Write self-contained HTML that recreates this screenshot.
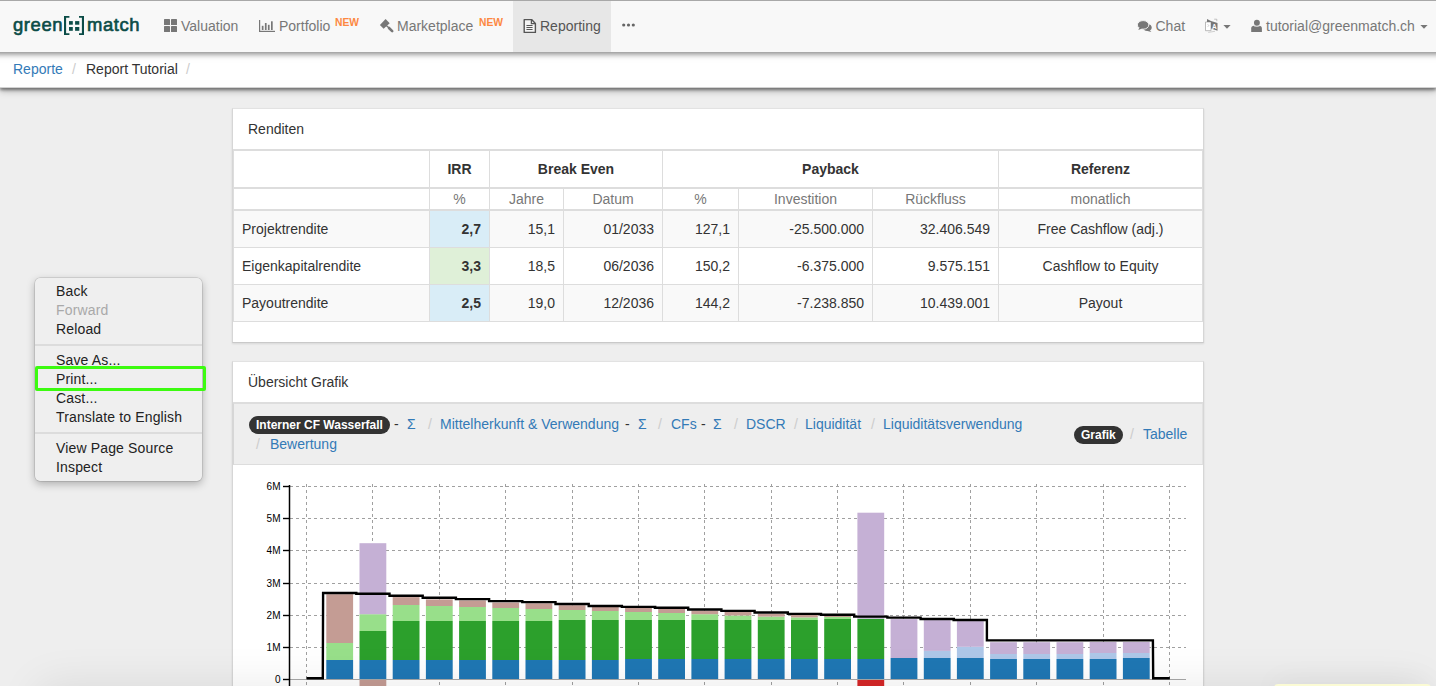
<!DOCTYPE html>
<html><head><meta charset="utf-8">
<style>
*{box-sizing:border-box;margin:0;padding:0}
html,body{width:1436px;height:686px;overflow:hidden}
body{background:#eeeeee;font-family:"Liberation Sans",sans-serif;font-size:14px;line-height:20px;color:#333;position:relative}
.abs{position:absolute;white-space:nowrap}
#nav{position:absolute;left:0;top:0;width:1436px;height:52px;background:#f8f8f8;border-top:1px solid #a8a8a8;z-index:3}
#nav::after{content:"";position:absolute;left:-30px;right:-30px;top:0;bottom:0;box-shadow:0 2px 6px rgba(0,0,0,0.5);z-index:-1;clip-path:inset(0 -10px -20px -10px)}
#crumb{position:absolute;left:0;top:52px;width:1436px;height:36px;background:#fff;border-bottom:1px solid #d2d2d2;box-shadow:0 2px 3px rgba(0,0,0,0.42), 0 3px 7px rgba(0,0,0,0.25);z-index:2}
.nt{color:#777;font-size:14px;line-height:20px}
.new{color:#fd8842;font-size:10.3px;font-weight:bold;line-height:10px}
.panel{position:absolute;background:#fff;border:1px solid #d6d6d6;border-top-color:#e2e2e2;border-bottom-color:#c9c9c9;box-shadow:0 1px 2px rgba(0,0,0,0.10)}
.ph{position:absolute;left:0;top:0;right:0;height:41px;border-bottom:1px solid #ddd;padding:10px 15px 0 15px;color:#333}
table.t{position:absolute;left:0;top:41px;border-collapse:collapse;table-layout:fixed;width:968px}
table.t td,table.t th{border:1px solid #ddd;padding:8px;line-height:20px;font-size:14px;white-space:nowrap}
table.t thead tr:first-child th{border-bottom-width:2px;text-align:center}
table.t thead tr.r2 th{padding:0 8px;font-weight:normal;color:#777;border-bottom-width:2px;text-align:center}
table.t tbody td{text-align:right}
table.t tbody td:first-child{text-align:left}
table.t tbody td:last-child{text-align:center}
table.t tbody tr.s td{background:#f9f9f9}
table.t td.info{background:#d9edf7 !important;font-weight:bold}
table.t td.succ{background:#dff0d8 !important;font-weight:bold}
.lnk{color:#337ab7}
.sep{color:#ccc}
.pill{background:#333;color:#fff;font-weight:bold;font-size:12px;border-radius:9px;line-height:17px;padding:0 7px}
#menu{position:absolute;left:35px;top:278px;width:167px;height:203px;background:#efefef;border-radius:5px;box-shadow:0 0 0 0.5px rgba(0,0,0,0.18),0 3px 8px rgba(0,0,0,0.28);z-index:10}
#menu .mi{position:absolute;left:21px;font-size:14px;line-height:16px;color:#222;white-space:nowrap;letter-spacing:0.15px}
#menu .hr{position:absolute;left:0;width:167px;height:2px;background:#dcdcdc}
#green{position:absolute;left:35px;top:366px;width:171px;height:25px;border:3px solid #3cfb10;border-radius:2px;z-index:11}
</style></head><body>

<div id="nav">
  <!-- logo -->
  <div class="abs" style="left:13px;top:10.5px;color:#0b4c47;font-weight:normal;-webkit-text-stroke:0.65px #0b4c47;font-size:19px;line-height:26px;transform:scaleX(0.97);transform-origin:0 0;letter-spacing:0.6px">green</div>
  <svg class="abs" style="left:63px;top:14px" width="23" height="21" viewBox="0 0 23 21"><path d="M1 1 H6.4 V2.8 H3.1 V18.2 H6.4 V20 H1 Z" fill="#0b4c47"/><rect x="6" y="6.1" width="3.8" height="3.6" fill="#0b4c47"/><rect x="12.1" y="6.1" width="4.2" height="3.6" fill="#0b4c47"/><rect x="6" y="12" width="3.8" height="3.8" fill="#0b4c47"/><rect x="12.1" y="12" width="4.2" height="3.8" fill="#0b4c47"/><path d="M16 1 H21 V20 H16 V18.2 H18.9 V2.8 H16 Z" fill="#0b4c47"/></svg>
  <div class="abs" style="left:87px;top:10.5px;color:#0b4c47;font-weight:normal;-webkit-text-stroke:0.65px #0b4c47;font-size:19px;line-height:26px;transform:scaleX(0.97);transform-origin:0 0;letter-spacing:0.6px">match</div>
  <!-- Valuation -->
  <svg class="abs" style="left:163px;top:17px" width="15" height="15" viewBox="0 0 15 15"><rect x="1" y="1" width="6" height="6" rx="0.6" fill="#777"/><rect x="8" y="1" width="6" height="6" rx="0.6" fill="#777"/><rect x="1" y="8" width="6" height="6" rx="0.6" fill="#777"/><rect x="8" y="8" width="6" height="6" rx="0.6" fill="#777"/></svg>
  <div class="abs nt" style="left:181px;top:15px">Valuation</div>
  <!-- Portfolio -->
  <svg class="abs" style="left:258px;top:18px" width="18" height="14" viewBox="0 0 18 14"><rect x="1" y="1" width="1.2" height="12" fill="#777"/><rect x="1" y="11.8" width="16" height="1.2" fill="#777"/><rect x="3.8" y="6.8" width="1.7" height="4.2" fill="#777"/><rect x="6.9" y="4" width="1.7" height="7" fill="#777"/><rect x="9.9" y="5.8" width="1.7" height="5.2" fill="#777"/><rect x="13" y="2.3" width="1.7" height="8.7" fill="#777"/></svg>
  <div class="abs nt" style="left:279px;top:15px">Portfolio</div>
  <div class="abs new" style="left:335px;top:17px">NEW</div>
  <!-- Marketplace -->
  <svg class="abs" style="left:376px;top:15px" width="22" height="20" viewBox="0 0 22 20"><path d="M9.6 3.1 L13.7 7.3 L7.6 12.8 L3.9 9 Z" fill="#777"/><line x1="10" y1="9.2" x2="12.8" y2="11.8" stroke="#777" stroke-width="1.3"/><line x1="13" y1="12" x2="16.2" y2="15.2" stroke="#777" stroke-width="2.6" stroke-linecap="round"/></svg>
  <div class="abs nt" style="left:397px;top:15px">Marketplace</div>
  <div class="abs new" style="left:479px;top:17px">NEW</div>
  <!-- Reporting active -->
  <div class="abs" style="left:513px;top:0;width:98px;height:51px;background:#e7e7e7"></div>
  <svg class="abs" style="left:522px;top:17px" width="15" height="16" viewBox="0 0 15 16"><path d="M2.2 1.6 H9.6 L13.4 5.4 V14.4 H2.2 Z" fill="#f4f4f4" stroke="#555" stroke-width="1.4" stroke-linejoin="round"/><path d="M9.4 1.6 V5.6 H13.4" fill="none" stroke="#555" stroke-width="1.3"/><rect x="4.3" y="7" width="6.4" height="1.1" rx="0.5" fill="#555"/><rect x="4.3" y="9" width="6.4" height="1.1" rx="0.5" fill="#555"/><rect x="4.3" y="11" width="6.4" height="1.1" rx="0.5" fill="#555"/></svg>
  <div class="abs nt" style="left:540px;top:15px;color:#555">Reporting</div>
  <!-- dots -->
  <svg class="abs" style="left:621px;top:21px" width="15" height="6" viewBox="0 0 15 6"><circle cx="2.7" cy="3" r="1.6" fill="#666"/><circle cx="7.5" cy="3" r="1.6" fill="#666"/><circle cx="12.3" cy="3" r="1.6" fill="#666"/></svg>
  <!-- Chat -->
  <svg class="abs" style="left:1134px;top:15px" width="20" height="18" viewBox="0 0 20 18"><ellipse cx="13.4" cy="11.6" rx="4.3" ry="3.4" fill="#777"/><path d="M15 13.5 L17.4 15.9 L12.5 14.8 Z" fill="#777"/><ellipse cx="9.1" cy="8.9" rx="5.7" ry="4.3" fill="#777" stroke="#f8f8f8" stroke-width="0.9"/><path d="M5.5 11.5 L4.3 14 L8.2 12.6 Z" fill="#777"/></svg>
  <div class="abs nt" style="left:1155.5px;top:15px">Chat</div>
  
  <!-- translate -->
  <svg class="abs" style="left:1200px;top:13px" width="22" height="22" viewBox="0 0 22 22"><path d="M5.5 8 H11 V16.7 H5.5 Z" fill="#fff" stroke="#aaa" stroke-width="0.8"/><path d="M7 5 L11 7 L11 8 L7 8 Z" fill="#777"/><path d="M14.2 5.2 H16.8 V7.2" fill="none" stroke="#aaa" stroke-width="0.7"/><path d="M11 7 L17.5 9 V16.8 L11 14.5 Z" fill="#777"/><text x="14.4" y="14.6" font-family="Liberation Sans" font-size="6.5" font-weight="bold" fill="#fff" text-anchor="middle">A</text><path d="M7.5 10.5 L9 11.5 L7.5 13" fill="none" stroke="#bbb" stroke-width="0.6"/><path d="M8.2 18.4 L15 17.3" stroke="#bbb" stroke-width="0.7"/></svg>
  <svg class="abs" style="left:1223px;top:24px" width="8" height="5" viewBox="0 0 8 5"><path d="M0.4 0 H7.6 L4 3.8 Z" fill="#777"/></svg>
  <!-- user -->
  <svg class="abs" style="left:1246px;top:15px" width="20" height="18" viewBox="0 0 20 18"><circle cx="10.9" cy="6.8" r="2.95" fill="#777"/><path d="M5.2 15.9 V12.6 Q5.2 9.8 8.2 9.8 H13 Q15.9 9.8 15.9 12.6 V15.9 Z" fill="#777" stroke="#f8f8f8" stroke-width="0"/><path d="M8 9.9 Q10.9 11 13.5 9.9" fill="none" stroke="#f8f8f8" stroke-width="0.8"/></svg>
  <div class="abs nt" style="left:1266px;top:15px">tutorial@greenmatch.ch</div>
  <svg class="abs" style="left:1420px;top:24px" width="8" height="5" viewBox="0 0 8 5"><path d="M0.4 0 H7.6 L4 3.8 Z" fill="#777"/></svg>
</div>

<div id="crumb">
  <div class="abs lnk" style="left:13px;top:7px">Reporte</div>
  <div class="abs sep" style="left:72px;top:7px">/</div>
  <div class="abs" style="left:86px;top:7px;color:#333">Report Tutorial</div>
  <div class="abs sep" style="left:186px;top:7px">/</div>
</div>

<!-- Panel 1 -->
<div class="panel" style="left:232px;top:108px;width:972px;height:235px">
  <div class="ph">Renditen</div>
  <table class="t">
    <colgroup><col style="width:196px"><col style="width:60px"><col style="width:74px"><col style="width:99px"><col style="width:76px"><col style="width:134px"><col style="width:126px"><col style="width:204px"></colgroup>
    <thead>
      <tr><th></th><th>IRR</th><th colspan="2">Break Even</th><th colspan="3">Payback</th><th>Referenz</th></tr>
      <tr class="r2"><th></th><th>%</th><th>Jahre</th><th>Datum</th><th>%</th><th>Investition</th><th>Rückfluss</th><th>monatlich</th></tr>
    </thead>
    <tbody>
      <tr class="s"><td>Projektrendite</td><td class="info">2,7</td><td>15,1</td><td>01/2033</td><td>127,1</td><td>-25.500.000</td><td>32.406.549</td><td>Free Cashflow (adj.)</td></tr>
      <tr><td>Eigenkapitalrendite</td><td class="succ">3,3</td><td>18,5</td><td>06/2036</td><td>150,2</td><td>-6.375.000</td><td>9.575.151</td><td>Cashflow to Equity</td></tr>
      <tr class="s"><td>Payoutrendite</td><td class="info">2,5</td><td>19,0</td><td>12/2036</td><td>144,2</td><td>-7.238.850</td><td>10.439.001</td><td>Payout</td></tr>
    </tbody>
  </table>
</div>

<!-- Panel 2 -->
<div class="panel" style="left:232px;top:361px;width:972px;height:340px">
  <div class="ph">Übersicht Grafik</div>
  <div style="position:absolute;left:0;top:41px;width:970px;height:62px;background:#eeeeee;border:1px solid #e2e2e2;border-left-color:#d6d6d6;border-top-color:#dddddd;border-bottom-color:#dddddd"></div>
</div>

<!-- chart nav (page coords) -->
<div class="abs pill" style="left:249px;top:416px;line-height:18px">Interner CF Wasserfall</div>
<div class="abs" style="left:394px;top:414px">-</div>
<div class="abs lnk" style="left:407px;top:414px">Σ</div>
<div class="abs sep" style="left:428px;top:414px">/</div>
<div class="abs lnk" style="left:440px;top:414px">Mittelherkunft &amp; Verwendung</div>
<div class="abs" style="left:625px;top:414px">-</div>
<div class="abs lnk" style="left:638px;top:414px">Σ</div>
<div class="abs sep" style="left:658px;top:414px">/</div>
<div class="abs lnk" style="left:671px;top:414px">CFs</div>
<div class="abs" style="left:701px;top:414px">-</div>
<div class="abs lnk" style="left:713px;top:414px">Σ</div>
<div class="abs sep" style="left:734px;top:414px">/</div>
<div class="abs lnk" style="left:746px;top:414px">DSCR</div>
<div class="abs sep" style="left:794px;top:414px">/</div>
<div class="abs lnk" style="left:805px;top:414px">Liquidität</div>
<div class="abs sep" style="left:871px;top:414px">/</div>
<div class="abs lnk" style="left:883px;top:414px">Liquiditätsverwendung</div>
<div class="abs sep" style="left:256px;top:434px">/</div>
<div class="abs lnk" style="left:270px;top:434px">Bewertung</div>
<div class="abs pill" style="left:1074px;top:426px;padding:0 7px;line-height:18px">Grafik</div>
<div class="abs sep" style="left:1130px;top:424px">/</div>
<div class="abs lnk" style="left:1143px;top:424px">Tabelle</div>

<!-- chart -->
<svg id="chart" class="abs" style="left:0;top:0;z-index:1" width="1436" height="686"><line x1="290" y1="647.5" x2="1186" y2="647.5" stroke="#a0a0a0" stroke-width="1" stroke-dasharray="3,3"/><line x1="290" y1="615.5" x2="1186" y2="615.5" stroke="#a0a0a0" stroke-width="1" stroke-dasharray="3,3"/><line x1="290" y1="583.5" x2="1186" y2="583.5" stroke="#a0a0a0" stroke-width="1" stroke-dasharray="3,3"/><line x1="290" y1="550.5" x2="1186" y2="550.5" stroke="#a0a0a0" stroke-width="1" stroke-dasharray="3,3"/><line x1="290" y1="518.5" x2="1186" y2="518.5" stroke="#a0a0a0" stroke-width="1" stroke-dasharray="3,3"/><line x1="290" y1="486.5" x2="1186" y2="486.5" stroke="#a0a0a0" stroke-width="1" stroke-dasharray="3,3"/><line x1="306.5" y1="484" x2="306.5" y2="686" stroke="#a0a0a0" stroke-width="1" stroke-dasharray="3,3"/><line x1="372.5" y1="484" x2="372.5" y2="686" stroke="#a0a0a0" stroke-width="1" stroke-dasharray="3,3"/><line x1="439.5" y1="484" x2="439.5" y2="686" stroke="#a0a0a0" stroke-width="1" stroke-dasharray="3,3"/><line x1="505.5" y1="484" x2="505.5" y2="686" stroke="#a0a0a0" stroke-width="1" stroke-dasharray="3,3"/><line x1="572.5" y1="484" x2="572.5" y2="686" stroke="#a0a0a0" stroke-width="1" stroke-dasharray="3,3"/><line x1="638.5" y1="484" x2="638.5" y2="686" stroke="#a0a0a0" stroke-width="1" stroke-dasharray="3,3"/><line x1="704.5" y1="484" x2="704.5" y2="686" stroke="#a0a0a0" stroke-width="1" stroke-dasharray="3,3"/><line x1="771.5" y1="484" x2="771.5" y2="686" stroke="#a0a0a0" stroke-width="1" stroke-dasharray="3,3"/><line x1="837.5" y1="484" x2="837.5" y2="686" stroke="#a0a0a0" stroke-width="1" stroke-dasharray="3,3"/><line x1="903.5" y1="484" x2="903.5" y2="686" stroke="#a0a0a0" stroke-width="1" stroke-dasharray="3,3"/><line x1="970.5" y1="484" x2="970.5" y2="686" stroke="#a0a0a0" stroke-width="1" stroke-dasharray="3,3"/><line x1="1036.5" y1="484" x2="1036.5" y2="686" stroke="#a0a0a0" stroke-width="1" stroke-dasharray="3,3"/><line x1="1103.5" y1="484" x2="1103.5" y2="686" stroke="#a0a0a0" stroke-width="1" stroke-dasharray="3,3"/><line x1="1169.5" y1="484" x2="1169.5" y2="686" stroke="#a0a0a0" stroke-width="1" stroke-dasharray="3,3"/><rect x="326.3" y="660.0" width="26.8" height="19.5" fill="#1f77b4"/><rect x="326.3" y="643.0" width="26.8" height="17.0" fill="#98df8a"/><rect x="326.3" y="594.2" width="26.8" height="48.8" fill="#c49c94"/><rect x="359.5" y="660.0" width="26.8" height="19.5" fill="#1f77b4"/><rect x="359.5" y="631.0" width="26.8" height="29.0" fill="#2ca02c"/><rect x="359.5" y="614.2" width="26.8" height="16.8" fill="#98df8a"/><rect x="359.5" y="543.2" width="26.8" height="71.0" fill="#c5b0d5"/><rect x="359.5" y="679.5" width="26.8" height="12" fill="#c49c94"/><rect x="392.7" y="660.0" width="26.8" height="19.5" fill="#1f77b4"/><rect x="392.7" y="621.0" width="26.8" height="39.0" fill="#2ca02c"/><rect x="392.7" y="605.0" width="26.8" height="16.0" fill="#98df8a"/><rect x="392.7" y="597.1" width="26.8" height="7.9" fill="#c49c94"/><rect x="425.9" y="660.0" width="26.8" height="19.5" fill="#1f77b4"/><rect x="425.9" y="621.0" width="26.8" height="39.0" fill="#2ca02c"/><rect x="425.9" y="606.0" width="26.8" height="15.0" fill="#98df8a"/><rect x="425.9" y="599.4" width="26.8" height="6.6" fill="#c49c94"/><rect x="459.1" y="660.0" width="26.8" height="19.5" fill="#1f77b4"/><rect x="459.1" y="621.0" width="26.8" height="39.0" fill="#2ca02c"/><rect x="459.1" y="607.0" width="26.8" height="14.0" fill="#98df8a"/><rect x="459.1" y="600.4" width="26.8" height="6.6" fill="#c49c94"/><rect x="492.3" y="660.0" width="26.8" height="19.5" fill="#1f77b4"/><rect x="492.3" y="621.0" width="26.8" height="39.0" fill="#2ca02c"/><rect x="492.3" y="608.0" width="26.8" height="13.0" fill="#98df8a"/><rect x="492.3" y="602.5" width="26.8" height="5.5" fill="#c49c94"/><rect x="525.5" y="660.0" width="26.8" height="19.5" fill="#1f77b4"/><rect x="525.5" y="621.0" width="26.8" height="39.0" fill="#2ca02c"/><rect x="525.5" y="609.0" width="26.8" height="12.0" fill="#98df8a"/><rect x="525.5" y="603.3" width="26.8" height="5.7" fill="#c49c94"/><rect x="558.7" y="660.0" width="26.8" height="19.5" fill="#1f77b4"/><rect x="558.7" y="620.0" width="26.8" height="40.0" fill="#2ca02c"/><rect x="558.7" y="610.0" width="26.8" height="10.0" fill="#98df8a"/><rect x="558.7" y="605.2" width="26.8" height="4.8" fill="#c49c94"/><rect x="591.9" y="660.0" width="26.8" height="19.5" fill="#1f77b4"/><rect x="591.9" y="620.0" width="26.8" height="40.0" fill="#2ca02c"/><rect x="591.9" y="611.0" width="26.8" height="9.0" fill="#98df8a"/><rect x="591.9" y="606.7" width="26.8" height="4.3" fill="#c49c94"/><rect x="625.1" y="659.0" width="26.8" height="20.5" fill="#1f77b4"/><rect x="625.1" y="620.0" width="26.8" height="39.0" fill="#2ca02c"/><rect x="625.1" y="612.0" width="26.8" height="8.0" fill="#98df8a"/><rect x="625.1" y="608.0" width="26.8" height="4.0" fill="#c49c94"/><rect x="658.2" y="659.0" width="26.8" height="20.5" fill="#1f77b4"/><rect x="658.2" y="620.0" width="26.8" height="39.0" fill="#2ca02c"/><rect x="658.2" y="613.0" width="26.8" height="7.0" fill="#98df8a"/><rect x="658.2" y="609.0" width="26.8" height="4.0" fill="#c49c94"/><rect x="691.4" y="659.0" width="26.8" height="20.5" fill="#1f77b4"/><rect x="691.4" y="620.0" width="26.8" height="39.0" fill="#2ca02c"/><rect x="691.4" y="614.2" width="26.8" height="5.8" fill="#98df8a"/><rect x="691.4" y="610.6" width="26.8" height="3.6" fill="#c49c94"/><rect x="724.6" y="659.0" width="26.8" height="20.5" fill="#1f77b4"/><rect x="724.6" y="620.0" width="26.8" height="39.0" fill="#2ca02c"/><rect x="724.6" y="615.5" width="26.8" height="4.5" fill="#98df8a"/><rect x="724.6" y="612.0" width="26.8" height="3.5" fill="#c49c94"/><rect x="757.8" y="659.0" width="26.8" height="20.5" fill="#1f77b4"/><rect x="757.8" y="620.0" width="26.8" height="39.0" fill="#2ca02c"/><rect x="757.8" y="616.6" width="26.8" height="3.4" fill="#98df8a"/><rect x="757.8" y="613.9" width="26.8" height="2.7" fill="#c49c94"/><rect x="791.0" y="659.0" width="26.8" height="20.5" fill="#1f77b4"/><rect x="791.0" y="620.0" width="26.8" height="39.0" fill="#2ca02c"/><rect x="791.0" y="617.4" width="26.8" height="2.6" fill="#98df8a"/><rect x="791.0" y="615.0" width="26.8" height="2.4" fill="#c49c94"/><rect x="824.2" y="659.0" width="26.8" height="20.5" fill="#1f77b4"/><rect x="824.2" y="619.0" width="26.8" height="40.0" fill="#2ca02c"/><rect x="824.2" y="617.0" width="26.8" height="2.0" fill="#98df8a"/><rect x="824.2" y="615.8" width="26.8" height="1.2" fill="#c49c94"/><rect x="857.4" y="659.0" width="26.8" height="20.5" fill="#1f77b4"/><rect x="857.4" y="618.7" width="26.8" height="40.3" fill="#2ca02c"/><rect x="857.4" y="512.7" width="26.8" height="106.0" fill="#c5b0d5"/><rect x="857.4" y="679.5" width="26.8" height="12" fill="#d62728"/><rect x="890.6" y="658.0" width="26.8" height="21.5" fill="#1f77b4"/><rect x="890.6" y="619.1" width="26.8" height="38.9" fill="#c5b0d5"/><rect x="923.8" y="658.0" width="26.8" height="21.5" fill="#1f77b4"/><rect x="923.8" y="650.9" width="26.8" height="7.1" fill="#aec7e8"/><rect x="923.8" y="620.1" width="26.8" height="30.8" fill="#c5b0d5"/><rect x="956.9" y="658.0" width="26.8" height="21.5" fill="#1f77b4"/><rect x="956.9" y="646.8" width="26.8" height="11.2" fill="#aec7e8"/><rect x="956.9" y="621.1" width="26.8" height="25.7" fill="#c5b0d5"/><rect x="990.1" y="659.0" width="26.8" height="20.5" fill="#1f77b4"/><rect x="990.1" y="654.0" width="26.8" height="5.0" fill="#aec7e8"/><rect x="990.1" y="642.2" width="26.8" height="11.8" fill="#c5b0d5"/><rect x="1023.3" y="659.0" width="26.8" height="20.5" fill="#1f77b4"/><rect x="1023.3" y="654.0" width="26.8" height="5.0" fill="#aec7e8"/><rect x="1023.3" y="642.2" width="26.8" height="11.8" fill="#c5b0d5"/><rect x="1056.5" y="659.0" width="26.8" height="20.5" fill="#1f77b4"/><rect x="1056.5" y="654.0" width="26.8" height="5.0" fill="#aec7e8"/><rect x="1056.5" y="642.2" width="26.8" height="11.8" fill="#c5b0d5"/><rect x="1089.7" y="659.0" width="26.8" height="20.5" fill="#1f77b4"/><rect x="1089.7" y="653.0" width="26.8" height="6.0" fill="#aec7e8"/><rect x="1089.7" y="642.0" width="26.8" height="11.0" fill="#c5b0d5"/><rect x="1122.9" y="658.0" width="26.8" height="21.5" fill="#1f77b4"/><rect x="1122.9" y="653.0" width="26.8" height="5.0" fill="#aec7e8"/><rect x="1122.9" y="642.0" width="26.8" height="11.0" fill="#c5b0d5"/><line x1="289" y1="679.5" x2="1186" y2="679.5" stroke="#a8a8a8" stroke-width="1"/><path d="M306.6 678.3 L322.8 678.3 L323.1 593.0 L356.3 593.0 L356.3 593.7 L389.5 593.7 L389.5 595.8 L422.7 595.8 L422.7 597.8 L455.9 597.8 L455.9 599.1 L489.1 599.1 L489.1 601.1 L522.3 601.1 L522.3 602.1 L555.5 602.1 L555.5 604.0 L588.7 604.0 L588.7 606.0 L621.9 606.0 L621.9 606.9 L655.1 606.9 L655.0 607.8 L688.2 607.8 L688.2 609.5 L721.4 609.5 L721.4 610.9 L754.6 610.9 L754.6 612.5 L787.8 612.5 L787.8 613.9 L821.0 613.9 L821.0 614.7 L854.2 614.7 L854.2 616.6 L887.4 616.6 L887.4 617.6 L920.6 617.6 L920.6 619.0 L953.8 619.0 L953.7 620.0 L986.9 620.0 L986.9 640.4 L1020.1 640.4 L1020.1 640.4 L1053.3 640.4 L1053.3 640.4 L1086.5 640.4 L1086.5 640.4 L1119.7 640.4 L1119.7 640.4 L1152.9 640.4 L1153.2 678.3 L1169.8 678.3" fill="none" stroke="#000" stroke-width="2.4" stroke-linejoin="miter"/><line x1="289.5" y1="485" x2="289.5" y2="686" stroke="#000" stroke-width="1.5"/><line x1="283" y1="679.5" x2="290" y2="679.5" stroke="#000" stroke-width="1.4"/><text x="280.5" y="683.2" font-family="Liberation Sans" font-size="10" text-anchor="end" fill="#000">0</text><line x1="283" y1="647.5" x2="290" y2="647.5" stroke="#000" stroke-width="1.4"/><text x="280.5" y="651.2" font-family="Liberation Sans" font-size="10" text-anchor="end" fill="#000">1M</text><line x1="283" y1="615.5" x2="290" y2="615.5" stroke="#000" stroke-width="1.4"/><text x="280.5" y="619.2" font-family="Liberation Sans" font-size="10" text-anchor="end" fill="#000">2M</text><line x1="283" y1="583.5" x2="290" y2="583.5" stroke="#000" stroke-width="1.4"/><text x="280.5" y="587.2" font-family="Liberation Sans" font-size="10" text-anchor="end" fill="#000">3M</text><line x1="283" y1="550.5" x2="290" y2="550.5" stroke="#000" stroke-width="1.4"/><text x="280.5" y="554.2" font-family="Liberation Sans" font-size="10" text-anchor="end" fill="#000">4M</text><line x1="283" y1="518.5" x2="290" y2="518.5" stroke="#000" stroke-width="1.4"/><text x="280.5" y="522.2" font-family="Liberation Sans" font-size="10" text-anchor="end" fill="#000">5M</text><line x1="283" y1="486.5" x2="290" y2="486.5" stroke="#000" stroke-width="1.4"/><text x="280.5" y="490.2" font-family="Liberation Sans" font-size="10" text-anchor="end" fill="#000">6M</text></svg>

<!-- context menu -->
<div id="menu">
  <div class="mi" style="top:5px">Back</div>
  <div class="mi" style="top:24px;color:#a9a9a9">Forward</div>
  <div class="mi" style="top:43px">Reload</div>
  <div class="hr" style="top:66px"></div>
  <div class="mi" style="top:74px">Save As...</div>
  <div class="mi" style="top:93px">Print...</div>
  <div class="mi" style="top:112px">Cast...</div>
  <div class="mi" style="top:131px">Translate to English</div>
  <div class="hr" style="top:154px"></div>
  <div class="mi" style="top:162px">View Page Source</div>
  <div class="mi" style="top:181px">Inspect</div>
</div>
<div id="green"></div>
<div style="position:absolute;left:45px;top:692px;width:1375px;height:60px;background:#ddd;box-shadow:0 0 45px 6px rgba(0,0,0,0.09);z-index:5"></div>
<div style="position:absolute;left:1274px;top:684px;width:157px;height:12px;background:#fbfbd4;border-radius:4px;box-shadow:0 0 30px rgba(0,0,0,0.07);z-index:6"></div>

</body></html>
